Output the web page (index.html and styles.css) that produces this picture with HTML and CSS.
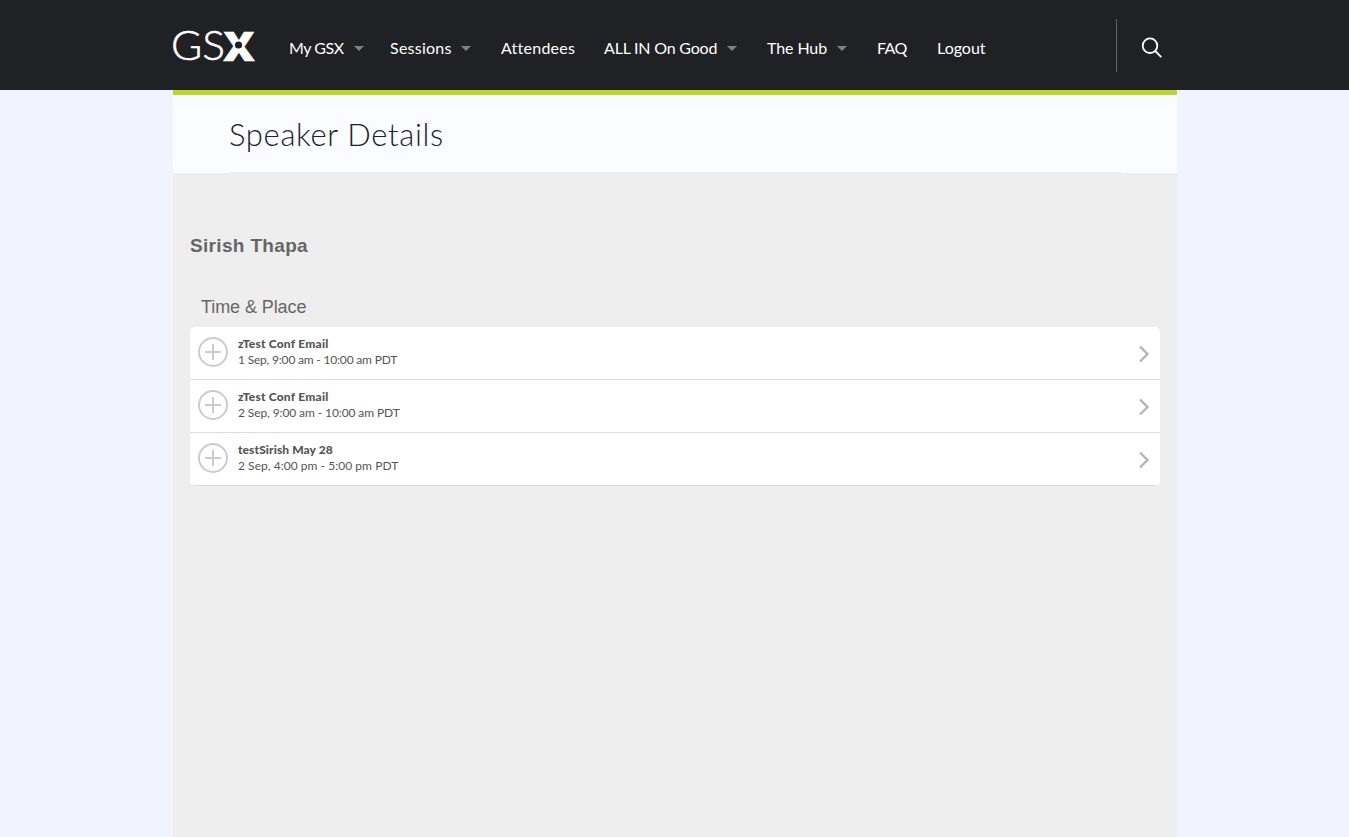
FILE: index.html
```html
<!DOCTYPE html>
<html lang="en">
<head>
<meta charset="utf-8">
<title>Speaker Details</title>
<link rel="stylesheet" href="styles.css">
</head>
<body>
<header class="topbar">
  <div class="topbar-inner">
    <a class="logo" aria-label="GSX">
      <svg width="82" height="32" viewBox="0 0 82 32">
        <text class="logo-thin" x="-2" y="31" textLength="54" lengthAdjust="spacingAndGlyphs">GS</text>
        <text class="logo-heavy" x="50.5" y="31.5" textLength="31" lengthAdjust="spacingAndGlyphs">X</text>
        <circle class="logo-hub" cx="65.5" cy="16" r="3.6"/>
      </svg>
    </a>
    <nav class="nav">
      <a class="nav-item w-my">My GSX<i class="caret"></i></a>
      <a class="nav-item w-sessions">Sessions<i class="caret"></i></a>
      <a class="nav-item w-attendees">Attendees</a>
      <a class="nav-item w-allin">ALL IN On Good<i class="caret"></i></a>
      <a class="nav-item w-hub">The Hub<i class="caret"></i></a>
      <a class="nav-item w-faq">FAQ</a>
      <a class="nav-item w-logout">Logout</a>
    </nav>
    <div class="search">
      <svg width="22" height="22" viewBox="0 0 22 22"><circle cx="9" cy="8.7" r="7.3"/><path d="M14.2 14 20.3 20.1"/></svg>
    </div>
  </div>
</header>
<main class="page">
  <div class="title-band"><h1 class="title">Speaker Details</h1></div>
  <section class="content">
    <h2 class="speaker">Sirish Thapa</h2>
    <h3 class="section-title">Time &amp; Place</h3>
    <ul class="sessions">
      <li class="session">
        <svg class="add" width="30" height="30" viewBox="0 0 30 30"><circle cx="15" cy="15" r="14"/><path d="M15 7v16M7 15h16"/></svg>
        <div class="info"><b class="name n1">zTest Conf Email</b><span class="time t1">1 Sep, 9:00 am - 10:00 am PDT</span></div>
        <svg class="chevron" width="12" height="18" viewBox="0 0 12 18"><path d="M2 1.5 9.5 9 2 16.5"/></svg>
      </li>
      <li class="session">
        <svg class="add" width="30" height="30" viewBox="0 0 30 30"><circle cx="15" cy="15" r="14"/><path d="M15 7v16M7 15h16"/></svg>
        <div class="info"><b class="name n1">zTest Conf Email</b><span class="time t2">2 Sep, 9:00 am - 10:00 am PDT</span></div>
        <svg class="chevron" width="12" height="18" viewBox="0 0 12 18"><path d="M2 1.5 9.5 9 2 16.5"/></svg>
      </li>
      <li class="session">
        <svg class="add" width="30" height="30" viewBox="0 0 30 30"><circle cx="15" cy="15" r="14"/><path d="M15 7v16M7 15h16"/></svg>
        <div class="info"><b class="name n3">testSirish May 28</b><span class="time t3">2 Sep, 4:00 pm - 5:00 pm PDT</span></div>
        <svg class="chevron" width="12" height="18" viewBox="0 0 12 18"><path d="M2 1.5 9.5 9 2 16.5"/></svg>
      </li>
    </ul>
  </section>
</main>
</body>
</html>
```
FILE: styles.css
```css
* { box-sizing: border-box; }
body { margin: 0; min-height: 837px; background: #f1f3ff; font-family: Lato, "Liberation Sans", sans-serif; display: flex; flex-direction: column; }
.topbar { height: 90px; background: #202125; padding-left: 173px; }
.topbar-inner { width: 1004px; height: 90px; display: flex; align-items: center; }
.logo { width: 116px; height: 32px; }
.logo svg { display: block; overflow: visible; }
.logo-thin { font: 300 41px Lato, sans-serif; fill: #fff; stroke: #fff; stroke-width: .5; }
.logo-heavy { font: 800 41px "Open Sans", sans-serif; fill: #fff; stroke: #fff; stroke-width: .7; }
.logo-hub { fill: #202125; }
.nav { display: flex; height: 20px; margin-top: 6px; line-height: 20px; font-size: 16px; color: #fff; }
.nav-item { display: flex; align-items: center; white-space: nowrap; }
.caret { margin-left: auto; border: 5px solid transparent; border-top-color: #808080; border-bottom: 0; }
.w-my { width: 75px; margin-right: 26px; letter-spacing: -.45px; }
.w-sessions { width: 81px; margin-right: 30px; letter-spacing: .25px; }
.w-attendees { width: 103px; letter-spacing: .25px; }
.w-allin { width: 133px; margin-right: 30px; letter-spacing: -.2px; }
.w-hub { width: 80px; margin-right: 30px; letter-spacing: -.1px; }
.w-faq { width: 60px; letter-spacing: -.6px; }
.w-logout { width: 60px; }
.search { margin-left: auto; width: 61px; height: 53px; border-left: 1px solid #626366; padding: 18px 0 0 24px; }
.search svg { display: block; fill: none; stroke: #fff; stroke-width: 1.8; }
.page { width: 1004px; margin-left: 173px; flex: 1; display: flex; flex-direction: column; background: #eee; }
.title-band { height: 83px; border-top: 5px solid #bdd62f; background: #fbfcff; padding: 0 56px; }
.title { margin: 0; height: 78px; padding-top: 20px; border-bottom: 1px solid #eee; font-size: 31px; line-height: 39px; letter-spacing: .65px; font-weight: 300; color: #202125; }
.content { padding: 60px 17px 0; }
.speaker { margin: 0; font: bold 19px/26px "Liberation Sans", sans-serif; letter-spacing: .33px; color: #666; }
.section-title { margin: 35px 0 0 11px; font: 18px/26px "Liberation Sans", sans-serif; letter-spacing: -.08px; color: #666; }
.sessions { margin: 7px 0 0; padding: 0; list-style: none; background: #fff; border-radius: 5px; overflow: hidden; }
.session { display: flex; height: 53px; border-bottom: 1px solid #dcdcdc; padding: 10px 10px 0 8px; }
.add { fill: none; stroke: #ccc; stroke-width: 2; margin-right: 10px; }
.info { display: flex; flex-direction: column; line-height: 16px; font-size: 12px; color: #555; margin-top: -1px; white-space: nowrap; }
.name { font-weight: 900; }
.n1 { letter-spacing: .22px; }
.n3 { letter-spacing: .1px; }
.t1 { letter-spacing: -.19px; }
.t2 { letter-spacing: -.1px; }
.t3 { letter-spacing: .04px; }
.chevron { margin: 8px 0 0 auto; fill: none; stroke: #b5b5b5; stroke-width: 2.4; }
```
